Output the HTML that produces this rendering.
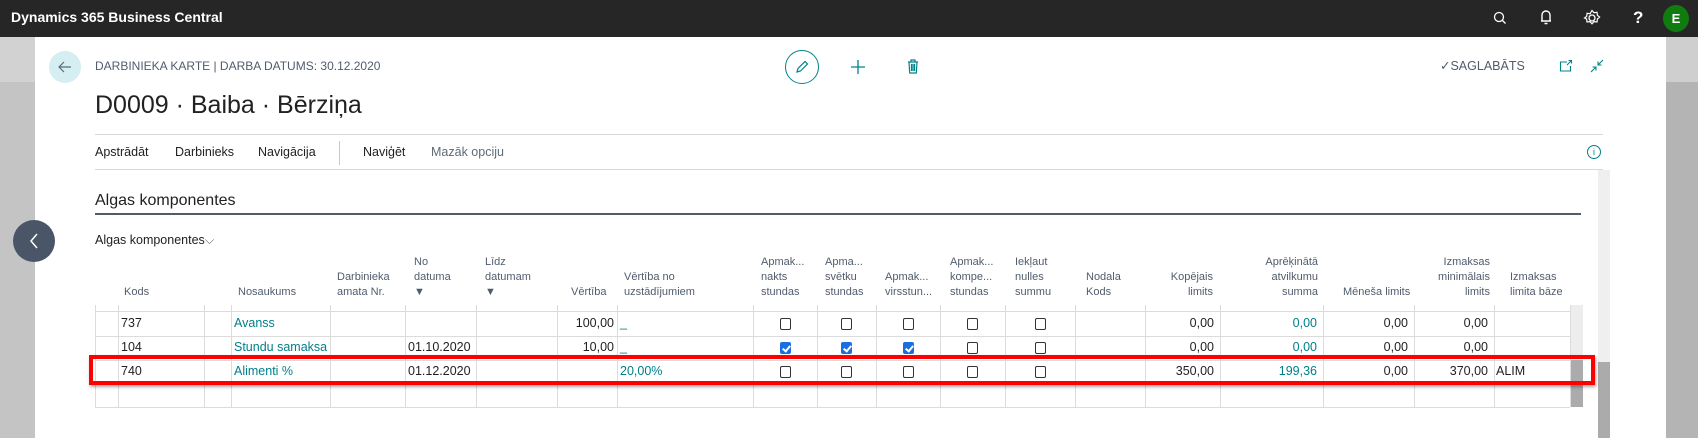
<!DOCTYPE html>
<html><head><meta charset="utf-8"><style>
*{margin:0;padding:0;box-sizing:border-box}
body{width:1698px;height:438px;overflow:hidden;position:relative;font-family:"Liberation Sans",sans-serif;background:#c4c4c4}
.a{position:absolute;white-space:nowrap}
.top{left:0;top:0;width:1698px;height:37px;background:#262626}
.card{left:35px;top:37px;width:1631px;height:401px;background:#fff}
.h{font-size:11px;color:#505c6d;line-height:15px}
.d{font-size:12.5px;color:#212121;top:0}
.n{font-size:12.5px;color:#212121}
.l{color:#00808a}
.vl{position:absolute;width:1px;background:#dcdcdc;top:305px;height:102px}
.hl{position:absolute;height:1px;background:#dcdcdc;left:95px;width:1475px}
.cb{position:absolute;width:11px;height:12px;border:1px solid #333;border-radius:2px;background:#fff}
.cb.on{background:#1a6fe0;border-color:#1a6fe0}
.cb.on:after{content:"";position:absolute;left:3px;top:1px;width:3px;height:6px;border:solid #fff;border-width:0 2px 2px 0;transform:rotate(40deg)}
</style></head><body>
<div class="a" style="left:0;top:37px;width:35px;height:45px;background:#d2d2d2"></div>
<div class="a" style="left:1666px;top:37px;width:32px;height:45px;background:#cfcfcf"></div>
<div class="a" style="left:1666px;top:82px;width:32px;height:356px;background:#b4b4b4"></div>
<div class="a top"></div>
<div class="a" style="left:11px;top:9px;color:#fff;font-weight:bold;font-size:14px">Dynamics 365 Business Central</div>
<svg class="a" style="left:1492px;top:10px" width="16" height="16" viewBox="0 0 16 16"><circle cx="7" cy="7" r="4.5" fill="none" stroke="#fff" stroke-width="1.3"/><path d="M10 10l3.5 3.5" stroke="#fff" stroke-width="1.3"/></svg>
<svg class="a" style="left:1538px;top:9px" width="16" height="18" viewBox="0 0 16 18"><path d="M4 12V6a4 4 0 0 1 8 0v6zM3 12h10M6.5 14.5h3" fill="none" stroke="#fff" stroke-width="1.4"/></svg>
<svg class="a" style="left:1583px;top:9px" width="18" height="18" viewBox="0 0 18 18"><circle cx="9" cy="9" r="3" fill="none" stroke="#fff" stroke-width="1.3"/><path d="M9 1.5l2 2.2 3-.4.4 3 2.2 1.7-2.2 2 -.4 3-3-.4-2 2.2-2-2.2-3 .4-.4-3L1.5 9l2.2-1.7.4-3 3 .4z" fill="none" stroke="#fff" stroke-width="1.2"/></svg>
<div class="a" style="left:1633px;top:8px;color:#fff;font-weight:bold;font-size:17px">?</div>
<div class="a" style="left:1663px;top:5px;width:26px;height:27px;border-radius:50%;background:#107c10;color:#fff;font-size:13px;font-weight:bold;text-align:center;line-height:27px">E</div>
<div class="a card"></div>
<div class="a" style="left:49px;top:51px;width:32px;height:32px;border-radius:50%;background:#d5eef1"></div>
<svg class="a" style="left:57px;top:59px" width="16" height="16" viewBox="0 0 16 16"><path d="M14 8H2M7 3L2 8l5 5" fill="none" stroke="#5d6b75" stroke-width="1.2"/></svg>
<div class="a h" style="left:95px;top:59px;font-size:12px">DARBINIEKA KARTE | DARBA DATUMS: 30.12.2020</div>
<div class="a" style="left:95px;top:91px;font-size:25px;color:#212121;font-weight:300">D0009 · Baiba · Bērziņa</div>
<div class="a" style="left:785px;top:50px;width:34px;height:34px;border-radius:50%;border:1.5px solid #008489"></div>
<svg class="a" style="left:794px;top:59px" width="16" height="16" viewBox="0 0 16 16"><path d="M3 13l1-3.5 7-7 2.5 2.5-7 7z" fill="none" stroke="#008489" stroke-width="1.2"/></svg>
<svg class="a" style="left:851px;top:60px" width="14" height="14" viewBox="0 0 14 14"><path d="M7 0v14M0 7h14" stroke="#008489" stroke-width="1.3"/></svg>
<svg class="a" style="left:907px;top:59px" width="12" height="15" viewBox="0 0 12 15"><path d="M1 3h10M4 3V1h4v2M2 3l.7 11h6.6L10 3M4.5 5v7M6 5v7M7.5 5v7" fill="none" stroke="#008489" stroke-width="1.2"/></svg>
<div class="a h" style="left:1440px;top:59px;font-size:12.5px">✓SAGLABĀTS</div>
<svg class="a" style="left:1559px;top:59px" width="14" height="14" viewBox="0 0 14 14"><path d="M8 3H1.5v9h10V7M9.5 1.5h3v3M12.5 1.5L8 6" fill="none" stroke="#008489" stroke-width="1.1"/></svg>
<svg class="a" style="left:1589px;top:58px" width="16" height="16" viewBox="0 0 16 16"><path d="M14 2l-5 5M9 3.5V7h3.5M2 14l5-5M7 12.5V9H3.5" fill="none" stroke="#008489" stroke-width="1.1"/></svg>
<div class="a" style="left:95px;top:134px;width:1508px;height:1px;background:#d7d7dc"></div>
<div class="a n" style="left:95px;top:145px">Apstrādāt</div>
<div class="a n" style="left:175px;top:145px">Darbinieks</div>
<div class="a n" style="left:258px;top:145px">Navigācija</div>
<div class="a" style="left:339px;top:141px;width:1px;height:24px;background:#c8c8c8"></div>
<div class="a n" style="left:363px;top:145px">Naviģēt</div>
<div class="a n" style="left:431px;top:145px;color:#5d6b75">Mazāk opciju</div>
<div class="a" style="left:1587px;top:145px;width:14px;height:14px;border-radius:50%;border:1.2px solid #008489;color:#008489;font-size:9px;text-align:center;line-height:12px">i</div>
<div class="a" style="left:95px;top:169px;width:1508px;height:1px;background:#d7d7dc"></div>
<div class="a" style="left:1598px;top:170px;width:12px;height:268px;background:#efefef"></div>
<div class="a" style="left:1598px;top:362px;width:12px;height:76px;background:#ababab"></div>
<div class="a" style="left:95px;top:192px;font-size:16px;color:#212121">Algas komponentes</div>
<div class="a" style="left:95px;top:213px;width:1486px;height:2px;background:#505c6d"></div>
<div class="a" style="left:13px;top:220px;width:42px;height:42px;border-radius:50%;background:#4a5568"></div>
<svg class="a" style="left:28px;top:233px" width="12" height="16" viewBox="0 0 12 16"><path d="M9 1L3 8l6 7" fill="none" stroke="#fff" stroke-width="1.5"/></svg>
<div class="a n" style="left:95px;top:233px">Algas komponentes<span style="color:#666">⌵</span></div>
<div class="a h" style="left:124px;top:285px">Kods</div>
<div class="a h" style="left:238px;top:285px">Nosaukums</div>
<div class="a h" style="left:337px;top:270px">Darbinieka<br>amata Nr.</div>
<div class="a h" style="left:414px;top:255px">No<br>datuma<br>▼</div>
<div class="a h" style="left:485px;top:255px">Līdz<br>datumam<br>▼</div>
<div class="a h" style="left:571px;top:285px">Vērtība</div>
<div class="a h" style="left:624px;top:270px">Vērtība no<br>uzstādījumiem</div>
<div class="a h" style="left:761px;top:255px">Apmak...<br>nakts<br>stundas</div>
<div class="a h" style="left:825px;top:255px">Apma...<br>svētku<br>stundas</div>
<div class="a h" style="left:885px;top:270px">Apmak...<br>virsstun...</div>
<div class="a h" style="left:950px;top:255px">Apmak...<br>kompe...<br>stundas</div>
<div class="a h" style="left:1015px;top:255px">Iekļaut<br>nulles<br>summu</div>
<div class="a h" style="left:1086px;top:270px">Nodala<br>Kods</div>
<div class="a h" style="left:1150px;top:270px;width:63px;text-align:right">Kopējais<br>limits</div>
<div class="a h" style="left:1228px;top:255px;width:90px;text-align:right">Aprēķinātā<br>atvilkumu<br>summa</div>
<div class="a h" style="left:1343px;top:285px">Mēneša limits</div>
<div class="a h" style="left:1415px;top:255px;width:75px;text-align:right">Izmaksas<br>minimālais<br>limits</div>
<div class="a h" style="left:1510px;top:270px">Izmaksas<br>limita bāze</div>
<div class="a" style="left:1570px;top:305px;width:13px;height:55px;background:#ededed"></div>
<div class="a" style="left:1570px;top:360px;width:13px;height:47px;background:#ababab"></div>
<div class="vl" style="left:95px"></div><div class="vl" style="left:118px"></div><div class="vl" style="left:204px"></div><div class="vl" style="left:231px"></div><div class="vl" style="left:330px"></div><div class="vl" style="left:405px"></div><div class="vl" style="left:476px"></div><div class="vl" style="left:557px"></div><div class="vl" style="left:617px"></div><div class="vl" style="left:753px"></div><div class="vl" style="left:817px"></div><div class="vl" style="left:876px"></div><div class="vl" style="left:940px"></div><div class="vl" style="left:1005px"></div><div class="vl" style="left:1075px"></div><div class="vl" style="left:1145px"></div><div class="vl" style="left:1220px"></div><div class="vl" style="left:1323px"></div><div class="vl" style="left:1414px"></div><div class="vl" style="left:1494px"></div><div class="vl" style="left:1570px"></div>
<div class="hl" style="top:311px"></div><div class="hl" style="top:336px"></div><div class="hl" style="top:360px"></div><div class="hl" style="top:383px"></div><div class="hl" style="top:407px"></div>
<div class="a d" style="left:121px;top:316px">737</div>
<div class="a d l" style="left:234px;top:316px">Avanss</div>
<div class="a d" style="left:557px;top:316px;width:57px;text-align:right">100,00</div>
<div class="a d l" style="left:620px;top:316px">_</div>
<div class="a d" style="left:1145px;top:316px;width:69px;text-align:right">0,00</div>
<div class="a d l" style="left:1220px;top:316px;width:97px;text-align:right">0,00</div>
<div class="a d" style="left:1323px;top:316px;width:85px;text-align:right">0,00</div>
<div class="a d" style="left:1414px;top:316px;width:74px;text-align:right">0,00</div>
<div class="a d" style="left:121px;top:340px">104</div>
<div class="a d l" style="left:234px;top:340px">Stundu samaksa</div>
<div class="a d" style="left:408px;top:340px">01.10.2020</div>
<div class="a d" style="left:557px;top:340px;width:57px;text-align:right">10,00</div>
<div class="a d l" style="left:620px;top:340px">_</div>
<div class="a d" style="left:1145px;top:340px;width:69px;text-align:right">0,00</div>
<div class="a d l" style="left:1220px;top:340px;width:97px;text-align:right">0,00</div>
<div class="a d" style="left:1323px;top:340px;width:85px;text-align:right">0,00</div>
<div class="a d" style="left:1414px;top:340px;width:74px;text-align:right">0,00</div>
<div class="a d" style="left:121px;top:364px">740</div>
<div class="a d l" style="left:234px;top:364px">Alimenti %</div>
<div class="a d" style="left:408px;top:364px">01.12.2020</div>
<div class="a d l" style="left:620px;top:364px">20,00%</div>
<div class="a d" style="left:1145px;top:364px;width:69px;text-align:right">350,00</div>
<div class="a d l" style="left:1220px;top:364px;width:97px;text-align:right">199,36</div>
<div class="a d" style="left:1323px;top:364px;width:85px;text-align:right">0,00</div>
<div class="a d" style="left:1414px;top:364px;width:74px;text-align:right">370,00</div>
<div class="a d" style="left:1496px;top:364px">ALIM</div>
<div class="cb" style="left:780px;top:318px"></div><div class="cb" style="left:841px;top:318px"></div><div class="cb" style="left:903px;top:318px"></div><div class="cb" style="left:967px;top:318px"></div><div class="cb" style="left:1035px;top:318px"></div>
<div class="cb on" style="left:780px;top:342px"></div><div class="cb on" style="left:841px;top:342px"></div><div class="cb on" style="left:903px;top:342px"></div><div class="cb" style="left:967px;top:342px"></div><div class="cb" style="left:1035px;top:342px"></div>
<div class="cb" style="left:780px;top:366px"></div><div class="cb" style="left:841px;top:366px"></div><div class="cb" style="left:903px;top:366px"></div><div class="cb" style="left:967px;top:366px"></div><div class="cb" style="left:1035px;top:366px"></div>
<div class="a" style="left:89px;top:355px;width:1506px;height:30px;border:4px solid #f00;box-shadow:1px 2px 3px rgba(0,0,0,.35)"></div>
</body></html>
